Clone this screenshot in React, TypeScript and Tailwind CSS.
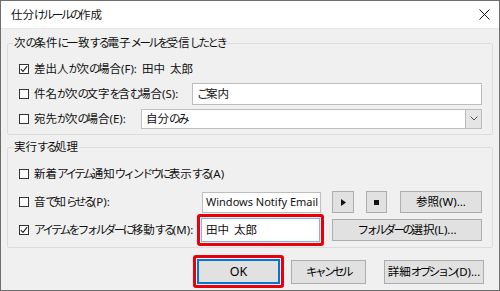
import { useState } from "react";

const font = "font-['Noto_Sans','Noto_Sans_CJK_JP',sans-serif]";

// Meiryo UI style: kana are narrower than kanji, so tighten kana runs
function T({ children }: { children: string }) {
  const parts = children.match(/[\u4e00-\u9fff]+|[\u3040-\u30ff]+| +|[^\u3040-\u30ff\u4e00-\u9fff ]+/g) || [];
  return (
    <>
      {parts.map((p, i) => {
        if (/[\u3040-\u30ff]/.test(p)) return <span key={i} className="tracking-[-2.5px]">{p}</span>;
        if (/[\u4e00-\u9fff]/.test(p)) return <span key={i}>{p}</span>;
        if (/^ +$/.test(p)) return <span key={i} className="inline-block w-[5px]" />;
        return <span key={i}>{p}</span>;
      })}
    </>
  );
}

function Check({ checked }: { checked?: boolean }) {
  return (
    <span className="w-[10px] h-[10px] border border-[#333] bg-white flex items-center justify-center shrink-0">
      {checked && (
        <svg width="8" height="8" viewBox="0 0 8 8">
          <path d="M0.8 4.2 L3 6.4 L7.2 1.2" fill="none" stroke="#222" strokeWidth="1.1" />
        </svg>
      )}
    </span>
  );
}

function Btn({ w, h = "h-[22px]", children, blue }: { w: string; h?: string; children: React.ReactNode; blue?: boolean }) {
  return (
    <button
      className={`${w} ${h} shrink-0 flex items-center justify-center whitespace-nowrap bg-[#e1e1e1] ${
        blue ? "border-2 border-[#0078d7]" : "border border-[#adadad]"
      } text-black`}
    >
      {children}
    </button>
  );
}

function Label({ checked, text }: { checked?: boolean; text: string }) {
  return (
    <div className="flex-1 flex items-center gap-[5px] whitespace-nowrap">
      <Check checked={checked} />
      <span><T>{text}</T></span>
    </div>
  );
}

export default function App() {
  const [subject] = useState("ご案内");

  return (
    <div className={`w-[500px] h-[291px] border border-[#6e6e6e] bg-[#f0f0f0] flex flex-col text-[11.5px] leading-[16px] text-[#111] ${font}`}>
      <div className="h-[28px] bg-white flex items-center justify-between pl-[10px] pr-[9px] border-b border-[#e8e8e8]">
        <span><T>仕分けルールの作成</T></span>
        <svg width="11" height="11" viewBox="0 0 11 11">
          <path d="M0.5 0.5 L10.5 10.5 M10.5 0.5 L0.5 10.5" stroke="#111" strokeWidth="1" />
        </svg>
      </div>

      <div className="flex flex-col px-[6px]">
        <fieldset className="mt-[6px] border border-[#dcdcdc] rounded-[2px] pt-[5px] pb-[3px] pl-[11px] pr-[10px]">
          <legend className="ml-[-6px] px-[1px] leading-[16px]"><T>次の条件に一致する電子メールを受信したとき</T></legend>
          <div className="h-[25px] flex items-center">
            <Label checked text="差出人が次の場合(F): 田中 太郎" />
          </div>
          <div className="h-[25px] flex items-center">
            <Label text="件名が次の文字を含む場合(S):" />
            <div className="w-[290px] h-[22px] shrink-0 bg-white border border-[#bdbdbd] flex items-center px-[4px]"><T>{subject}</T></div>
          </div>
          <div className="h-[25px] flex items-center">
            <Label text="宛先が次の場合(E):" />
            <div className="w-[341px] h-[20px] shrink-0 bg-white border border-[#bdbdbd] flex items-center">
              <span className="flex-1 px-[4px]"><T>自分のみ</T></span>
              <span className="w-[16px] h-full bg-[#e5e5e5] border-l border-[#bdbdbd] flex items-center justify-center">
                <svg width="8" height="5" viewBox="0 0 8 5">
                  <path d="M0.5 0.5 L4 4 L7.5 0.5" fill="none" stroke="#555" strokeWidth="1" />
                </svg>
              </span>
            </div>
          </div>
        </fieldset>

        <fieldset className="mt-[4px] border border-[#dcdcdc] rounded-[2px] pt-[6px] pb-[1px] pl-[11px] pr-[10px]">
          <legend className="ml-[-6px] px-[1px] leading-[16px]"><T>実行する処理</T></legend>
          <div className="h-[26px] flex items-center">
            <Label text="新着アイテム通知ウィンドウに表示する(A)" />
          </div>
          <div className="mt-[3px] h-[24px] flex items-center">
            <Label text="音で知らせる(P):" />
            <div className="w-[119px] h-[21px] shrink-0 bg-white border border-[#bdbdbd] flex items-center px-[3px] overflow-hidden whitespace-nowrap text-[11px]">
              Windows Notify Email
            </div>
            <div className="ml-[11px]">
              <Btn w="w-[22px]">
                <svg width="5" height="7" viewBox="0 0 5 7">
                  <path d="M0 0 L5 3.5 L0 7 Z" fill="#111" />
                </svg>
              </Btn>
            </div>
            <div className="ml-[12px]">
              <Btn w="w-[21px]">
                <span className="w-[5px] h-[5px] bg-[#111]" />
              </Btn>
            </div>
            <div className="ml-[13px]">
              <Btn w="w-[82px]"><T>参照(W)...</T></Btn>
            </div>
          </div>
          <div className="h-[32px] flex items-center">
            <Label checked text="アイテムをフォルダーに移動する(M):" />
            <div className="w-[127px] h-[32px] border-[3px] border-[#e8000b] rounded-[3px] p-[1px] shrink-0">
              <div className="w-full h-full bg-white border border-[#7eb4ea] flex items-center px-[4px]"><T>田中 太郎</T></div>
            </div>
            <div className="ml-[8px]">
              <Btn w="w-[150px]"><T>フォルダーの選択(L)...</T></Btn>
            </div>
          </div>
        </fieldset>
      </div>

      <div className="mt-[7px] flex items-center justify-end pr-[15px]">
        <div className="w-[91px] h-[33px] border-[3px] border-[#e8000b] rounded-[3px] p-[1px] flex">
          <Btn w="w-full" h="h-full" blue>
            <span className="text-[12.5px]">OK</span>
          </Btn>
        </div>
        <div className="ml-[7px] self-start mt-[5px]">
          <Btn w="w-[75px]" h="h-[24px]"><T>キャンセル</T></Btn>
        </div>
        <div className="ml-[18px] self-start mt-[5px]">
          <Btn w="w-[100px]" h="h-[24px]"><T>詳細オプション(D)...</T></Btn>
        </div>
      </div>
    </div>
  );
}
